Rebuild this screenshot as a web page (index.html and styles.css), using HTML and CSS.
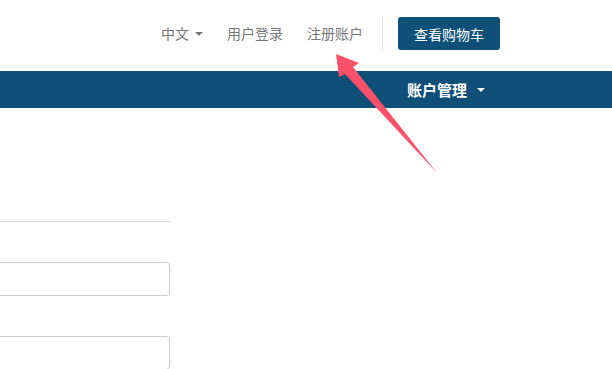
FILE: index.html
```html
<!DOCTYPE html>
<html lang="zh">
<head>
<meta charset="utf-8">
<link rel="stylesheet" href="styles.css">
</head>
<body>
<header class="topbar">
  <nav class="toplinks">
    <a class="link lang">中文 <span class="caret"></span></a>
    <a class="link">用户登录</a>
    <a class="link">注册账户</a>
    <span class="divider"></span>
    <a class="cart-btn">查看购物车</a>
  </nav>
</header>
<div class="mainbar">
  <a class="menu">账户管理 <span class="caret white"></span></a>
</div>
<main class="content">
  <div class="form-col">
    <hr class="rule">
    <div class="field"><input class="input" type="text"></div>
    <div class="field"><input class="input" type="text"></div>
  </div>
</main>
<svg class="arrow" width="612" height="369" viewBox="0 0 612 369">
  <polygon points="336,54 359,63 353,67 437,173 345,74 339,77" fill="#fb5069"/>
</svg>
</body>
</html>
```
FILE: styles.css
```css
html, body {
  margin: 0;
  padding: 0;
  background: #fff;
  font-family: "Liberation Sans", "Noto Sans CJK SC", sans-serif;
  overflow: hidden;
}
body { height: 369px; }
.topbar {
  box-sizing: border-box;
  height: 71px;
  display: flex;
  justify-content: flex-end;
  align-items: center;
  padding-right: 112px;
  padding-bottom: 4px;
}
.toplinks {
  display: flex;
  align-items: center;
}
.link {
  font-size: 14px;
  color: #777;
  margin-left: 24px;
  display: flex;
  align-items: center;
  line-height: 20px;
}
.lang { margin-left: 0; }
.caret {
  display: inline-block;
  width: 0;
  height: 0;
  border-top: 4px solid #777;
  border-left: 4px solid transparent;
  border-right: 4px solid transparent;
  margin-left: 6px;
}
.caret.white { border-top-color: #fff; margin-left: 10px; }
.divider {
  width: 1px;
  height: 34px;
  background: #e2e2e2;
  margin-left: 19px;
  margin-right: 15px;
}
.cart-btn {
  background: #0e5077;
  color: #fff;
  font-size: 14px;
  height: 33px;
  width: 102px;
  display: flex;
  align-items: center;
  justify-content: center;
  border-radius: 3px;
}
.mainbar {
  height: 37px;
  background: #0e5077;
  display: flex;
  align-items: center;
  justify-content: flex-end;
  padding-right: 127px;
}
.menu {
  color: #fff;
  font-weight: bold;
  font-size: 15px;
  display: flex;
  align-items: center;
}
.content { padding-top: 113px; }
.form-col {
  width: 190px;
  margin-left: -20px;
}
.rule {
  border: 0;
  border-top: 1px solid #ddd;
  margin: 0 0 40px 0;
}
.field { margin-bottom: 40px; }
.input {
  display: block;
  box-sizing: border-box;
  width: 100%;
  height: 34px;
  border: 1px solid #ccc;
  border-radius: 4px;
  margin: 0;
}
.arrow {
  position: absolute;
  left: 0;
  top: 0;
  pointer-events: none;
}
```
